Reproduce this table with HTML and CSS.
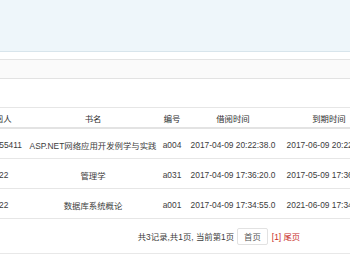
FILE: index.html
```html
<!DOCTYPE html>
<html lang="zh-CN">
<head>
<meta charset="utf-8">
<title>借阅记录</title>
<link rel="stylesheet" href="styles.css">
</head>
<body>
  <header class="topbar"></header>
  <div class="crumbs"></div>
  <main class="panel">
    <table class="records">
      <colgroup>
        <col class="c-reader">
        <col class="c-title">
        <col class="c-code">
        <col class="c-date">
        <col class="c-date2">
        <col class="c-op">
      </colgroup>
      <thead>
        <tr>
          <th>借阅人</th>
          <th>书名</th>
          <th>编号</th>
          <th>借阅时间</th>
          <th>到期时间</th>
          <th>操作</th>
        </tr>
      </thead>
      <tbody>
        <tr>
          <td>1415255411</td>
          <td>ASP.NET网络应用开发例学与实践</td>
          <td>a004</td>
          <td>2017-04-09 20:22:38.0</td>
          <td>2017-06-09 20:22:38.0</td>
          <td>续借</td>
        </tr>
        <tr>
          <td>1222</td>
          <td>管理学</td>
          <td>a031</td>
          <td>2017-04-09 17:36:20.0</td>
          <td>2017-05-09 17:36:20.0</td>
          <td>续借</td>
        </tr>
        <tr>
          <td>1222</td>
          <td>数据库系统概论</td>
          <td>a001</td>
          <td>2017-04-09 17:34:55.0</td>
          <td>2021-06-09 17:34:55.0</td>
          <td>续借</td>
        </tr>
      </tbody>
    </table>
    <nav class="pager">
      <span class="pager-info">共3记录,共1页, 当前第1页</span>
      <a class="pager-btn">首页</a>
      <span class="pager-current">[1] 尾页</span>
    </nav>
  </main>
</body>
</html>
```
FILE: styles.css
```css
html, body {
  margin: 0;
  padding: 0;
  background: #ffffff;
}

body {
  width: 350px;
  height: 280px;
  overflow: hidden;
  font-family: "Liberation Sans", "Noto Sans CJK SC", sans-serif;
  font-size: 8.4px;
  color: #333;
}

.topbar {
  height: 51px;
  background: #eef6fa;
  border-bottom: 1px solid #d8e5ec;
}

.crumbs {
  margin-top: 7px;
  height: 18px;
  background: #fafafa;
  border-top: 1px solid #e4e4e4;
  border-bottom: 1px solid #e2e2e2;
}

.panel {
  margin-top: 28px;
  margin-left: -30px;
  width: 498px;
}

.records {
  width: 100%;
  border-collapse: collapse;
  table-layout: fixed;
}

.c-reader { width: 58px; }
.c-title  { width: 130px; }
.c-code   { width: 28px; }
.c-date   { width: 94px; }
.c-date2  { width: 98px; }

.records th,
.records td {
  padding: 0;
  text-align: center;
  white-space: nowrap;
  overflow: hidden;
}

.records th {
  height: 19px;
  font-weight: normal;
  color: #2e2e2e;
  border-top: 1px solid #e6e6e6;
  border-bottom: 2px solid #e3e3e3;
}

.records td {
  height: 27px;
  padding-top: 2px;
  color: #3c3c3c;
  border-bottom: 1px solid #e6e6e6;
}

.pager {
  height: 34px;
  display: flex;
  align-items: center;
  justify-content: center;
  border-bottom: 1px solid #e8e8e8;
  color: #3c3c3c;
}

.pager-btn {
  margin-left: 3px;
  height: 15px;
  padding: 0 6px;
  display: flex;
  align-items: center;
  border: 1px solid #e2e2e2;
  border-radius: 2px;
  color: #555;
}

.pager-current {
  margin-left: 4px;
  color: #c9302c;
}
```
